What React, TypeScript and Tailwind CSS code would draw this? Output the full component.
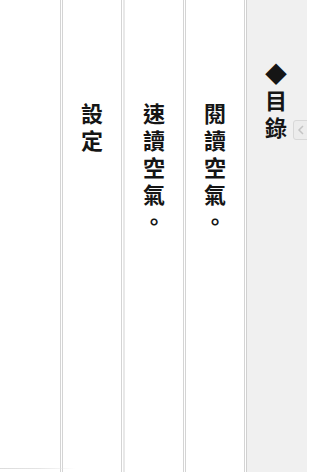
import React from "react";

const font = {
  fontFamily: '"Noto Sans CJK TC", "Noto Sans CJK SC", sans-serif',
};

function VCol({ text, className }: { text: string; className: string }) {
  return (
    <div className={className}>
      <div
        className="text-[22px] leading-[22px] tracking-[5px] font-bold text-[#151515]"
        style={{ ...font, writingMode: "vertical-rl", textOrientation: "upright" }}
      >
        {text}
      </div>
    </div>
  );
}

export default function App() {
  return (
    <div className="w-[307px] h-[472px] bg-white flex gap-px overflow-hidden relative">
      <div className="w-[61px] h-full border-r border-[#d4d4d4] relative shrink-0">
        <div className="absolute left-0 bottom-[3px] w-[76px] h-px bg-gradient-to-r from-[#dcdcdc] via-[#e4e4e4] to-transparent" />
      </div>
      <VCol
        text="設定"
        className="w-[60px] h-full border-x border-[#d4d4d4] shrink-0 flex justify-center pt-[103px]"
      />
      <VCol
        text="速讀空氣。"
        className="w-[61px] h-full border-l-2 border-l-[#e8e8e8] border-r border-r-[#d4d4d4] shrink-0 flex justify-center pt-[103px]"
      />
      <VCol
        text="閱讀空氣。"
        className="w-[60px] h-full border-x border-[#d4d4d4] shrink-0 flex justify-center pt-[103px]"
      />
      <div className="w-[61px] h-full border-l border-[#d0d0d0] bg-[#f0f0f0] shrink-0 relative flex justify-center pt-[63px]">
        <div
          className="text-[22px] leading-[22px] tracking-[5px] font-bold text-[#151515] mr-[2px]"
          style={{ ...font, writingMode: "vertical-rl", textOrientation: "upright" }}
        >
          ◆目錄
        </div>
        <div className="absolute left-[46px] top-[120px] w-[20px] h-[20px] rounded-[3px] border border-[#d8d8d8] bg-[#ececec] flex items-center pl-[3px]">
          <svg width="8" height="10" viewBox="0 0 8 10">
            <path d="M6 1 L2 5 L6 9" fill="none" stroke="#c4c4c4" strokeWidth="1.5" />
          </svg>
        </div>
      </div>
    </div>
  );
}
